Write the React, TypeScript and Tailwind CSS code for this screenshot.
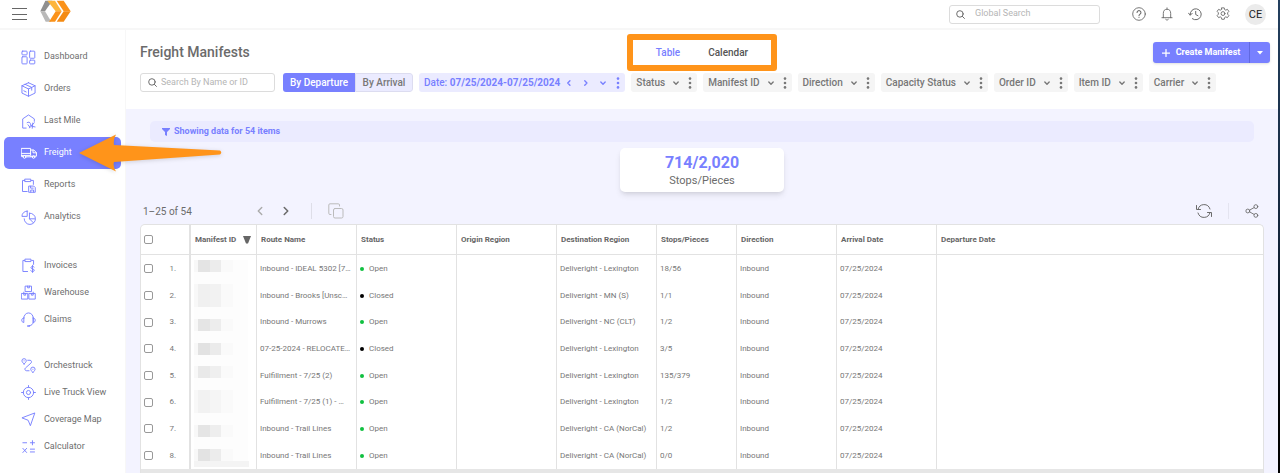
import type { ReactNode } from 'react';

interface IconProps {
  children: ReactNode;
  className?: string;
  box?: string;
}

const Icon = ({ children, className = 'w-4 h-4', box = '0 0 16 16' }: IconProps) => (
  <svg
    className={`shrink-0 ${className}`}
    viewBox={box}
    fill="none"
    stroke="currentColor"
    strokeLinecap="round"
    strokeLinejoin="round"
    aria-hidden="true"
  >
    {children}
  </svg>
);

const navGroups = [
  {
    rowClass: 'h-8',
    items: [
      {
        name: 'Dashboard',
        icon: (
          <>
            <rect x="1" y="1.2" width="5.5" height="4" rx="0.8" />
            <rect x="1" y="7.2" width="5.5" height="7.6" rx="0.8" />
            <rect x="9.2" y="1.2" width="5.5" height="7.6" rx="0.8" />
            <rect x="9.2" y="10.8" width="5.5" height="4" rx="0.8" />
          </>
        ),
      },
      {
        name: 'Orders',
        icon: <path d="M8 .8l7 3.2v7.8L8 15.2l-7-3.4V4L8 .8zM1 4l7 3.4L15 4M8 7.4v7.8M4.4 2.5l7 3.2v3M3 9.4l2.5 1.2" />,
      },
      {
        name: 'Last Mile',
        icon: (
          <>
            <path d="M5.5 15H1.8V5.2L8 1l6.2 4.2v2.6" />
            <path d="M6.5 9.2c1.5-1 3-.6 3.5 1l.8 2.4 3.4-3.2M9 14.8l1-2.2 2 .6 3 .6M12 15.2l.6-5.6M7.5 11.5l2 2.6" />
          </>
        ),
      },
      {
        name: 'Freight',
        icon: (
          <>
            <path d="M.6 3.4h9v7H.6zM9.6 5h3.2l2.6 2.6v3.6H9.6M.6 8.4h9M12 5v2.8h3.4M.6 10.4v1.2h1.2M5.4 11.8h5" />
            <circle cx="3.5" cy="12" r="1.3" />
            <circle cx="12.6" cy="12" r="1.3" />
          </>
        ),
      },
      {
        name: 'Reports',
        icon: (
          <>
            <path d="M4 2.6H1.6v11.8h5M11 2.6h2.2v4.2M4.4 1.2h6v2.6h-6z" />
            <path d="M8.6 8.6h5l1.6 1.6v5H8.6zM10.2 8.8v2h2.8M10.4 15v-2.2h3V15" />
          </>
        ),
      },
      {
        name: 'Analytics',
        icon: (
          <>
            <path d="M6.6 1.2v5.6H1c0-3.2 2.4-5.6 5.6-5.6z" />
            <path d="M9 3.4a6 6 0 1 1-5.6 6M9 3.4v6l4.2 4.2M9 9.4h5.8" />
          </>
        ),
      },
    ],
  },
  {
    rowClass: 'h-[27px]',
    items: [
      {
        name: 'Invoices',
        icon: (
          <>
            <path d="M4 2.6H2v11.8h5M11.4 2.6h2v4.2M4.6 1.2h6v2.6h-6z" />
            <path d="M14 9.6c-.6-.8-3.4-1-3.4.7 0 1.8 3.6 1 3.6 2.8 0 1.7-3.2 1.6-3.9.5M12.3 7.8v7.6" />
          </>
        ),
      },
      {
        name: 'Warehouse',
        icon: <path d="M4.8 1.2h6.4V7H4.8zM.8 9h6.4v6H.8zM8.8 9h6.4v6H8.8zM7 1.2V3h2V1.2M3 9v1.8h2V9M11 9v1.8h2V9M3 9V7.6M13 9V7.6" />,
      },
      {
        name: 'Claims',
        icon: (
          <>
            <path d="M3 6.4a5 5.4 0 0 1 10 0v4c0 2.4-1.6 4-4 4.2M3 6.4v4.8C1.4 11 .8 10 .8 8.8S1.4 6.6 3 6.4zM13 6.4v4.8c1.6-.2 2.2-1.2 2.2-2.4S14.6 6.6 13 6.4z" />
            <path d="M7.2 14.8H9" strokeWidth="1.6" />
          </>
        ),
      },
    ],
  },
  {
    rowClass: 'h-[27px]',
    items: [
      {
        name: 'Orchestruck',
        icon: (
          <>
            <path d="M3.3 6.4C1.8 4.8 1 4 1 3a2.3 2.3 0 0 1 4.6 0c0 1-.8 1.8-2.3 3.4zM12.7 15.4c-1.5-1.6-2.3-2.4-2.3-3.4a2.3 2.3 0 0 1 4.6 0c0 1-.8 1.8-2.3 3.4z" />
            <path d="M7.2 2.4h2.4a1.7 1.7 0 0 1 1 3L4.8 10.6a1.7 1.7 0 0 0 1.2 3h2.6" />
            <path d="M3.3 3v.1M12.7 12v.1" />
          </>
        ),
      },
      {
        name: 'Live Truck View',
        icon: (
          <>
            <circle cx="8" cy="8" r="5.5" />
            <circle cx="8" cy="8" r="2.2" />
            <path d="M8 .6v1.9M8 13.5v1.9M.6 8h1.9M13.5 8h1.9" />
          </>
        ),
      },
      { name: 'Coverage Map', icon: <path d="M14.6 1.4L10 14.6 7.6 8.8 1.4 6.4z" /> },
      { name: 'Calculator', icon: <path d="M2 4h4M10 4h4.4M12.2 1.8v4.4M2 10l4 4.4M6 10l-4 4.4M10 10.8h4.4M10 13.8h4.4" /> },
    ],
  },
];

const filters = ['Status', 'Manifest ID', 'Direction', 'Capacity Status', 'Order ID', 'Item ID', 'Carrier'];

const columns = [
  { title: 'Route Name', width: 'w-[100px]' },
  { title: 'Status', width: 'w-[100px]' },
  { title: 'Origin Region', width: 'w-[100px]' },
  { title: 'Destination Region', width: 'w-[100px]' },
  { title: 'Stops/Pieces', width: 'w-20' },
  { title: 'Direction', width: 'w-[100px]' },
  { title: 'Arrival Date', width: 'w-[100px]' },
  { title: 'Departure Date', width: '' },
];

const rows = [
  { route: 'Inbound - IDEAL 5302 [7…', status: 'Open', dest: 'Deliveright - Lexington', stops: '18/56' },
  { route: 'Inbound - Brooks [Unsc…', status: 'Closed', dest: 'Deliveright - MN (S)', stops: '1/1' },
  { route: 'Inbound - Murrows', status: 'Open', dest: 'Deliveright - NC (CLT)', stops: '1/2' },
  { route: '07-25-2024 - RELOCATE…', status: 'Closed', dest: 'Deliveright - Lexington', stops: '3/5' },
  { route: 'Fulfillment - 7/25 (2)', status: 'Open', dest: 'Deliveright - Lexington', stops: '135/379' },
  { route: 'Fulfillment - 7/25 (1) - …', status: 'Open', dest: 'Deliveright - Lexington', stops: '1/2' },
  { route: 'Inbound - Trail Lines', status: 'Open', dest: 'Deliveright - CA (NorCal)', stops: '1/2' },
  { route: 'Inbound - Trail Lines', status: 'Open', dest: 'Deliveright - CA (NorCal)', stops: '0/0' },
];

// y, height, dark tone, light tone
const mosaic: [number, number, string, string][] = [
  [5, 12, '#e4e4e4', '#ececec'],
  [29, 23, '#f0f0f0', '#f2f2f2'],
  [64, 12, '#e5e5e5', '#ededed'],
  [88, 12, '#e2e2e2', '#ebebeb'],
  [111, 12, '#e9e9e9', '#efefef'],
  [135, 23, '#f2f2f2', '#f5f5f5'],
  [170, 12, '#e5e5e5', '#eeeeee'],
  [194, 12, '#e3e3e3', '#ececec'],
];

const SearchIcon = () => (
  <Icon className="w-[9px] h-[9px] text-[#666]">
    <circle cx="7" cy="7" r="5.8" strokeWidth="1.7" />
    <path d="M11.4 11.4l3.6 3.6" strokeWidth="1.7" />
  </Icon>
);

const Chevron = ({ d = 'M4.5 6.5L8 10l3.5-3.5' }: { d?: string }) => (
  <Icon className="w-2.5 h-2.5">
    <path d={d} strokeWidth="2.2" />
  </Icon>
);

const Dots = () => (
  <svg className="w-1 h-3 shrink-0" viewBox="0 0 4 12" fill="currentColor" aria-hidden="true">
    <circle cx="2" cy="1.6" r="1.3" />
    <circle cx="2" cy="6" r="1.3" />
    <circle cx="2" cy="10.4" r="1.3" />
  </svg>
);

const TopBar = () => (
  <header className="flex h-[30px] items-center border-b-2 border-[#f7f7f7] px-3">
    <button aria-label="Menu" className="text-[#666]">
      <Icon className="w-4 h-3" box="0 0 16 12">
        <path d="M0 .5h15M0 6.5h15M0 11.5h15" strokeLinecap="butt" />
      </Icon>
    </button>
    <svg className="-mt-1.5 ml-3 h-[22px] w-[31px]" viewBox="0 0 93 66" aria-label="Logo">
      <path d="M16 2h21L15 34H1z" fill="#8f8f8f" />
      <path d="M1 34h14l19 31H17z" fill="#b9b9b9" />
      <path d="M22 2h23l20 32H47z" fill="#fdb53c" />
      <path d="M47 34h18L45 65H27z" fill="#fb9219" />
      <path d="M50 2h21l21 32H71z" fill="#fb9219" />
      <path d="M71 34h21L71 65H50z" fill="#f48a12" />
    </svg>
    <div className="ml-auto flex items-center text-[#666]">
      <label className="mr-8 flex h-[19px] w-[151px] items-center gap-2.5 rounded-[3px] border border-[#dcdcdc] px-1.5">
        <SearchIcon />
        <input aria-label="Global Search" placeholder="Global Search" className="w-full text-[9px] outline-none placeholder:text-[#b5b5b5]" />
      </label>
      <div className="flex items-center gap-3.5">
        <button aria-label="Help">
          <Icon className="w-3.5 h-3.5">
            <circle cx="8" cy="8" r="7.2" />
            <path d="M5.8 6.3a2.2 2.2 0 1 1 3.4 1.9c-.8.5-1.2.9-1.2 1.7M8 11.9v.1" strokeWidth="1.2" />
          </Icon>
        </button>
        <button aria-label="Notifications">
          <Icon className="w-3.5 h-3.5">
            <path d="M2.2 12.2h11.6M3.8 12.2V7.4a4.2 4.8 0 0 1 8.4 0v4.8M8 1v1.4M6.4 14.2c.6 1 2.6 1 3.2 0" />
          </Icon>
        </button>
        <button aria-label="History">
          <Icon className="w-3.5 h-3.5">
            <path d="M2.5 9A6.3 6.3 0 1 1 5 13.4M.6 7l2 2.4 2.2-2.2M8.8 5v3.6l2.6 1.4" strokeWidth="1.1" />
          </Icon>
        </button>
        <button aria-label="Settings">
          <Icon className="w-3.5 h-3.5">
            <path d="M6.6 1h2.8l.5 2 1.2.6 2-.9 1.6 2.3-1.4 1.6v1.6l1.4 1.6-1.6 2.3-2-.8-1.2.7-.5 2H6.6l-.5-2-1.2-.7-2 .8-1.6-2.3 1.4-1.6V6.6L1.3 5l1.6-2.3 2 .9L6.1 3z" />
            <circle cx="8" cy="7.5" r="2.2" />
          </Icon>
        </button>
        <button className="ml-px h-[21px] w-[21px] rounded-full bg-[#ebebeb] text-[11px] leading-none text-[#222]">CE</button>
      </div>
    </div>
  </header>
);

const Sidebar = () => (
  <nav className="flex w-[126px] shrink-0 flex-col gap-[19px] border-r border-[#f7f7f7] px-1 pt-[11px]">
    {navGroups.map((group) => (
      <ul key={group.items[0].name}>
        {group.items.map((item) => {
          const active = item.name === 'Freight';
          return (
            <li key={item.name} className={`relative flex items-center ${group.rowClass}`}>
              <a
                href="#"
                className={`flex h-full w-full items-center gap-2 rounded-[5px] pl-[17px] text-[9px] ${
                  active ? 'bg-[#7880ff] text-white' : 'text-[#6e6e6e]'
                }`}
              >
                <Icon className={active ? 'w-4 h-4 -mr-px text-white' : 'w-[15px] h-[15px] text-[#7880ff]'}>{item.icon}</Icon>
                {item.name}
              </a>
              {active && (
                <svg className="absolute left-[74px] -top-1 z-10 h-10 w-[145px] drop-shadow-sm" viewBox="0 0 145 40" aria-hidden="true">
                  <path d="M1 20L38 1.5Q35 7 36 12L142 17.5Q144.5 19.5 142 21.5L36 29Q34.5 33 38 38.5Z" fill="#ff941a" />
                </svg>
              )}
            </li>
          );
        })}
      </ul>
    ))}
  </nav>
);

const FilterBar = () => (
  <div className="flex items-center gap-1.5 text-[10px] font-medium text-[#777]">
    <label className="mr-0.5 flex h-[19px] w-[135px] items-center gap-1 rounded-[3px] border border-[#dcdcdc] px-[7px] text-[9px] font-normal">
      <SearchIcon />
      <input aria-label="Search By Name or ID" placeholder="Search By Name or ID" className="w-full outline-none placeholder:text-[#b5b5b5]" />
    </label>
    <div className="flex h-[19px] overflow-hidden rounded-[3px]">
      <button className="w-[72px] bg-[#7880ff] text-white">By Departure</button>
      <button className="w-[58px] rounded-r-[3px] border border-[#dcdcf0] bg-[#ebebff]">By Arrival</button>
    </div>
    <div className="flex h-[19px] items-center rounded-[3px] bg-[#ebebff] px-[5px] text-[#7880ff]">
      <span className="mr-1 whitespace-nowrap font-bold"><span className="font-medium">Date:</span> 07/25/2024-07/25/2024</span>
      <button aria-label="Previous day" className="mr-[7px]"><Chevron d="M9.5 4.5L6 8l3.5 3.5" /></button>
      <button aria-label="Next day" className="mr-[7px]"><Chevron d="M6 4.5L9.5 8 6 11.5" /></button>
      <button aria-label="Date options" className="mr-2"><Chevron /></button>
      <button aria-label="Date menu"><Dots /></button>
    </div>
    {filters.map((name) => (
      <div key={name} className="flex h-[19px] items-center rounded-[3px] bg-[#f5f5f5] px-[5px]">
        <button className="flex items-center gap-[6px] whitespace-nowrap">
          {name}
          <Chevron />
        </button>
        <button aria-label={`${name} menu`} className="ml-[7px]"><Dots /></button>
      </div>
    ))}
  </div>
);

const Checkbox = ({ label }: { label: string }) => (
  <input
    type="checkbox"
    aria-label={label}
    className="block h-[9px] w-[9px] appearance-none rounded-[2px] border border-[#999] bg-white checked:bg-[#7880ff]"
  />
);

const ManifestTable = () => (
  <div className="overflow-hidden rounded-t-[5px] border-x border-t border-[#e2e2e2] bg-white">
    <table className="w-full table-fixed border-separate border-spacing-0 text-left text-[8px] leading-3 text-[#777]">
      <thead>
        <tr className="h-[30px]">
          <th className="w-[50px] border-b border-r-2 border-[#e2e2e2] pl-[3px]"><Checkbox label="Select all" /></th>
          <th className="w-[66px] border-b border-r border-[#e2e2e2] pl-1 font-bold text-[#666]">
            <span className="flex items-center justify-between pr-[5px]">
              Manifest ID
              <svg className="h-2 w-2" viewBox="0 0 8 8" fill="currentColor" aria-hidden="true"><path d="M0 0h8L5 7.5H3z" /></svg>
            </span>
          </th>
          {columns.map((col) => (
            <th key={col.title} className={`border-b border-r border-[#e2e2e2] pl-1 font-bold text-[#666] last:border-r-0 ${col.width}`}>
              {col.title}
            </th>
          ))}
        </tr>
      </thead>
      <tbody>
        {rows.map((row, i) => (
          <tr
            key={i}
            className="h-[27px] nth-[3n]:h-[26px] [&>td]:border-r [&>td]:border-[#e2e2e2] [&>td]:pl-[3px] [&>td:first-child]:border-r-2 [&>td:last-child]:border-r-0"
          >
            <td>
              <div className="flex items-center justify-between pr-[13px]">
                <Checkbox label={`Select row ${i + 1}`} />
                {i + 1}.
              </div>
            </td>
            <td className="relative">
              {i === 0 && (
                <svg className="absolute left-[2px] top-0 h-[214px] w-[57px]" viewBox="0 0 57 214" aria-hidden="true">
                  <path d="M1 5h54v206H1z" fill="#fdfdfd" />
                  {mosaic.map(([y, h, dark, light]) => (
                    <g key={y}>
                      <path d={`M1 ${y}h4v${h}H1z`} fill="#f8f8f8" />
                      <path d={`M5 ${y}h12v${h}H5z`} fill={dark} />
                      <path d={`M17 ${y}h11v${h}H17z`} fill={light} />
                      <path d={`M28 ${y}h12v${h}H28z`} fill="#fafafa" />
                    </g>
                  ))}
                  <path d="M1 206h55v6H1z" fill="#f4f4f4" />
                </svg>
              )}
            </td>
            <td className="whitespace-nowrap">{row.route}</td>
            <td>
              <span className="flex items-center gap-[5px]">
                <span className={`h-1 w-1 rounded-full ${row.status === 'Open' ? 'bg-[#10c040]' : 'bg-black'}`} />
                {row.status}
              </span>
            </td>
            <td />
            <td className="whitespace-nowrap">{row.dest}</td>
            <td>{row.stops}</td>
            <td>Inbound</td>
            <td>07/25/2024</td>
            <td />
          </tr>
        ))}
      </tbody>
    </table>
    <div className="h-1 bg-[#e6e6e6]" />
  </div>
);

export default function App() {
  return (
    <div className="flex min-h-screen bg-white font-['Roboto',sans-serif]">
      <div className="flex min-w-0 flex-1 flex-col">
        <TopBar />
        <div className="flex flex-1">
          <Sidebar />
          <main className="flex min-w-0 flex-1 flex-col bg-[#f3f3ff]">
            <section className="bg-white pb-[17px] pl-3.5 pt-1">
              <div className="mb-0.5 grid grid-cols-[1fr_auto_1fr] items-center pr-3.5">
                <h1 className="text-[14px] font-medium text-[#6b6b6b]">Freight Manifests</h1>
                <div className="flex h-[37px] w-[150px] items-center justify-center gap-7 rounded-[3px] border-[6px] border-[#ff941a] text-[10px] font-medium">
                  <button className="text-[#7880ff]">Table</button>
                  <button className="text-[#555]">Calendar</button>
                </div>
                <div className="-mr-1.5 flex h-[21px] justify-self-end rounded-[3px] bg-[#7880ff] text-[9px] font-bold text-white shadow">
                  <button className="flex w-24 items-center justify-center gap-1.5 whitespace-nowrap">
                    <Icon className="w-2 h-2"><path d="M8 1v14M1 8h14" strokeWidth="2.5" /></Icon>
                    Create Manifest
                  </button>
                  <button aria-label="More create options" className="flex w-[21px] items-center justify-center border-l border-[#6068e0]">
                    <svg className="h-1 w-1.5" viewBox="0 0 6 4" fill="currentColor" aria-hidden="true"><path d="M0 0h6L3 3.5z" /></svg>
                  </button>
                </div>
              </div>
              <FilterBar />
            </section>
            <section className="flex flex-col px-3.5 pt-3">
              <p className="mx-2.5 flex h-[21px] items-center gap-1 rounded-[5px] bg-[#ebebff] pl-3 text-[9px] font-bold text-[#7880ff]">
                <svg className="h-2 w-2" viewBox="0 0 8 8" fill="currentColor" aria-hidden="true"><path d="M0 0h8v1L5 4v4L3 7V4L0 1z" /></svg>
                Showing data for 54 items
              </p>
              <div className="mt-1.5 flex h-11 w-[164px] flex-col items-center justify-center self-center rounded-[5px] bg-white pt-1 shadow-md">
                <strong className="text-[16px] font-bold leading-[18px] text-[#7880ff]">714/2,020</strong>
                <span className="text-[11px] leading-[18px] text-[#6b6b6b]">Stops/Pieces</span>
              </div>
              <div className="flex h-8 items-center pl-[3px] pr-[5px] pt-1.5 text-[10px] text-[#6b6b6b]">
                <span className="w-[110px]">1–25 of 54</span>
                <button aria-label="Previous page" className="mr-3 text-[#aaa]">
                  <Icon className="w-3.5 h-3.5"><path d="M10 4L6 8l4 4" strokeWidth="1.6" /></Icon>
                </button>
                <button aria-label="Next page" className="mr-[18px]">
                  <Icon className="w-3.5 h-3.5"><path d="M6 4l4 4-4 4" strokeWidth="1.8" /></Icon>
                </button>
                <span className="mr-4 h-4 w-px bg-[#dedee8]" />
                <button aria-label="Copy" className="text-[#bbb]">
                  <Icon><rect x="5.5" y="5.5" width="9.5" height="9.5" rx="1.5" /><path d="M3 11.5H2A1.2 1.2 0 0 1 .8 10.3V2A1.2 1.2 0 0 1 2 .8h8.3A1.2 1.2 0 0 1 11.5 2v1" /></Icon>
                </button>
                <button aria-label="Refresh" className="ml-auto mr-4">
                  <Icon><path d="M2 6.5A6.2 6.2 0 0 1 14 6M14 9.5A6.2 6.2 0 0 1 2 10M.5 2.5v4h4M15.5 13.5v-4h-4" /></Icon>
                </button>
                <span className="mr-4 h-4 w-px bg-[#e4e4f0]" />
                <button aria-label="Share">
                  <Icon className="w-3.5 h-3.5"><circle cx="3.2" cy="8" r="2.2" /><circle cx="12.4" cy="3" r="2.2" /><circle cx="12.4" cy="13" r="2.2" /><path d="M5.2 7l5.2-2.9M5.2 9l5.2 2.9" /></Icon>
                </button>
              </div>
              <ManifestTable />
            </section>
          </main>
        </div>
      </div>
      <div className="w-0.5 shrink-0 bg-linear-to-b from-[#24405f] via-[#14263c] via-50% to-black" />
    </div>
  );
}
